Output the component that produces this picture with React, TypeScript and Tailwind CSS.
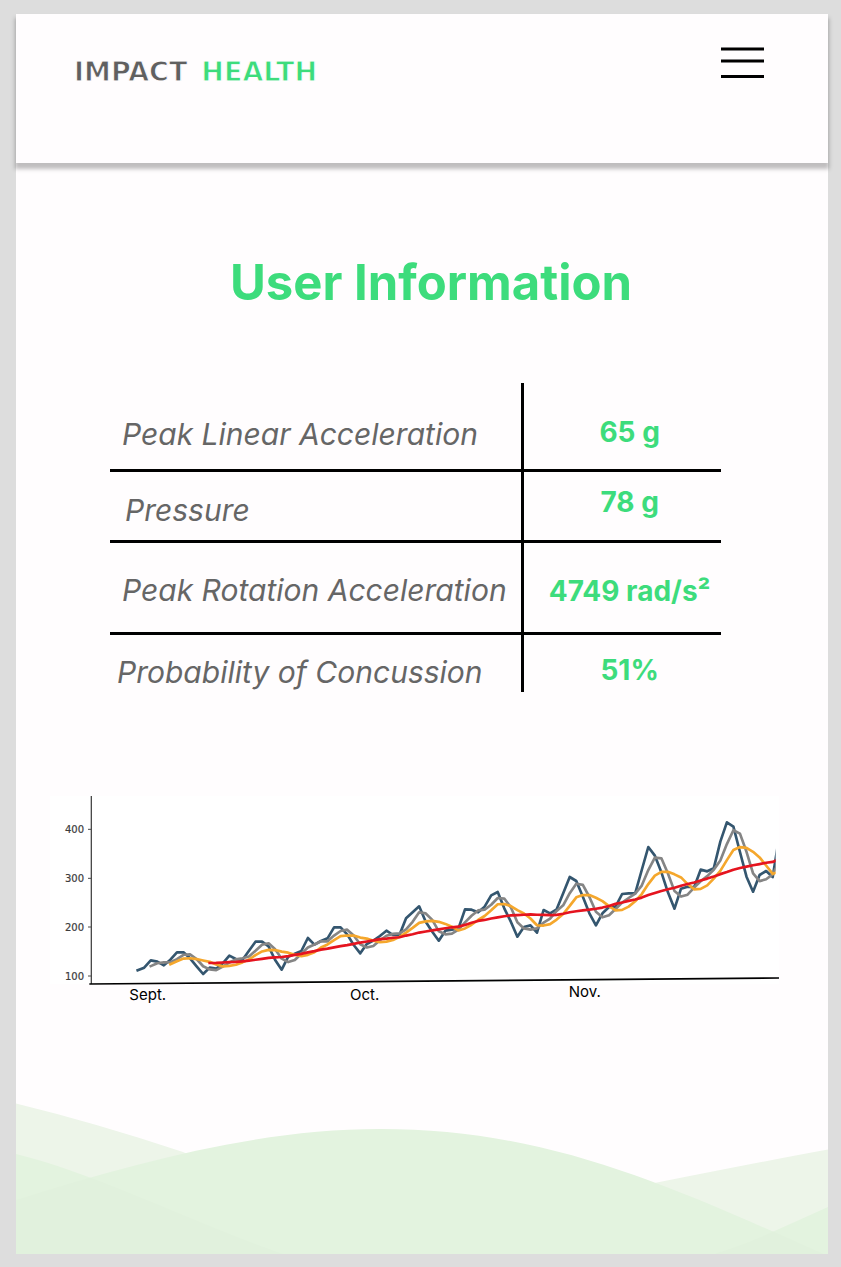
const metrics = [
  { label: 'Peak Linear Acceleration', value: '65 g', labelCell: 'h-[89px] pt-[31px] pl-[12px]', valueCell: 'pt-[29px]' },
  { label: 'Pressure', value: '78 g', labelCell: 'h-[71px] pt-[18px] pl-[15px]', valueCell: 'pt-[10px]' },
  { label: 'Peak Rotation Acceleration', value: '4749 rad/s²', labelCell: 'h-[92px] pt-[27px] pl-[12px]', valueCell: 'pt-[28px]' },
  { label: 'Probability of Concussion', value: '51%', labelCell: 'h-[57px] pt-[17px] pl-[7px]', valueCell: 'pt-[15px]' },
];

const readings = [
  571, 563, 541, 545, 556, 539, 517, 517, 535, 559, 582, 563, 566, 550, 527, 537, 540, 512, 485, 485,
  499, 540, 569, 530, 521, 513, 474, 494, 483, 475, 442, 442, 463, 495, 520, 492, 482, 468, 452, 465,
  464, 415, 397, 379, 425, 455, 482, 452, 449, 445, 388, 389, 397, 380, 346, 336, 385, 425, 470, 441,
  436, 458, 390, 400, 388, 340, 291, 303, 350, 400, 436, 400, 381, 380, 342, 340, 340, 270, 201, 227,
  277, 337, 386, 326, 320, 322, 269, 274, 265, 185, 127, 140, 216, 290, 335, 285, 273, 291, 170,
];

function movingAverage(size: number) {
  const points: string[] = [];
  for (let i = size - 1; i < readings.length; i++) {
    const slice = readings.slice(i - size + 1, i + 1);
    const mean = slice.reduce((a, b) => a + b, 0) / size;
    points.push(`${(263 + i * 19.64).toFixed(1)},${(mean - 48).toFixed(1)}`);
  }
  return points.join(' ');
}

const series = [
  { size: 1, color: '#34566f' },
  { size: 3, color: '#858585' },
  { size: 6, color: '#f5a72c' },
  { size: 12, color: '#e5141f' },
];

const yTicks = [
  { label: '400', y: 100 },
  { label: '300', y: 247 },
  { label: '200', y: 393 },
  { label: '100', y: 540 },
];

const months = [
  { label: 'Sept.', x: 238, y: 613 },
  { label: 'Oct.', x: 900, y: 613 },
  { label: 'Nov.', x: 1556, y: 604 },
];

function Header() {
  return (
    <header className="relative flex h-[149px] items-start justify-between bg-[#fffdfe] pr-16 pl-[58px] shadow-[0_5px_4px_1px_rgba(0,0,0,0.25)]">
      <a
        href="#"
        className="mt-[41px] flex gap-[14px] font-['DejaVu_Sans',sans-serif] text-[27px] leading-[34px] font-bold text-[#606060] [-webkit-text-stroke:1px_#fffdfe]"
      >
        <span>IMPACT</span>
        <span className="text-[#3ddc7c]">HEALTH</span>
      </a>
      <button type="button" aria-label="Menu" className="mt-[33px]">
        <svg width="43" height="31" viewBox="0 0 43 31" className="block" stroke="#000" strokeWidth="3">
          <path d="M0 2H43M0 14H43M0 29.500H43" />
        </svg>
      </button>
    </header>
  );
}

function MetricsTable() {
  return (
    <table className="w-full table-fixed border-separate border-spacing-0">
      <tbody>
        {metrics.map((m, i) => {
          const rule = i < metrics.length - 1 ? 'border-b-[3px]' : '';
          return (
            <tr key={m.label}>
              <th
                scope="row"
                className={`w-[67.8%] border-r-[3px] border-black text-left align-top text-[30px] leading-[40px] font-normal whitespace-nowrap text-[#666666] italic ${rule} ${m.labelCell}`}
              >
                {m.label}
              </th>
              <td
                className={`border-black pl-[14px] text-center align-top text-[28px] leading-[40px] font-bold whitespace-nowrap text-[#3ddc7c] ${rule} ${m.valueCell}`}
              >
                {m.value}
              </td>
            </tr>
          );
        })}
      </tbody>
    </table>
  );
}

function TrendChart() {
  return (
    <svg viewBox="0 0 2187 630" className="block h-auto w-full" role="img" aria-label="Readings from September to November">
      <defs>
        <clipPath id="plot">
          <rect x="124" y="0" width="2053" height="564" />
        </clipPath>
      </defs>
      <rect width="2187" height="564" fill="#ffffff" />
      <path d="M124 0V564" stroke="#4a4a4a" strokeWidth="4" />
      {yTicks.map((t) => (
        <g key={t.label}>
          <path d={`M114 ${t.y}H124`} stroke="#4a4a4a" strokeWidth="3" />
          <text x="102" y={t.y + 11} textAnchor="end" fontSize="30" fill="#3c3c3c" stroke="#3c3c3c" strokeWidth="0.600" className="font-['DejaVu_Sans',sans-serif]">
            {t.label}
          </text>
        </g>
      ))}
      <g clipPath="url(#plot)" fill="none" strokeWidth="8" strokeLinejoin="round" strokeLinecap="square">
        {series.map((s) => (
          <polyline key={s.size} points={movingAverage(s.size)} stroke={s.color} />
        ))}
      </g>
      <path d="M118 564L2187 546" stroke="#000" strokeWidth="5" />
      {months.map((m) => (
        <text key={m.label} x={m.x} y={m.y} fontSize="45" fill="#000">
          {m.label}
        </text>
      ))}
    </svg>
  );
}

const centreHill = 'M0 98C121 60 243 27 364 27C530 27 650 82 812 154V160H0Z';
const leftHill = 'M0 52C75 70 157 112 261 150L290 160H0Z';
const rightHill = 'M812 105L753 131.500Q728 143 695 153V160H812Z';

function Hills() {
  return (
    <svg viewBox="0 0 812 152" className="block h-auto w-full" aria-hidden="true">
      <defs>
        <clipPath id="centre">
          <path d={centreHill} />
        </clipPath>
      </defs>
      <path d="M0 1.500Q80 21 167 50L400 152H0Z" fill="#edf5e9" />
      <path d="M560 98L641 80.500Q754 58 812 47.500V152H560Z" fill="#edf5e9" />
      <path d={centreHill} fill="#e3f3df" />
      <path d={leftHill} fill="#e3f3df" />
      <path d={rightHill} fill="#e3f3df" />
      <path d={leftHill + rightHill} fill="#e1f1dd" clipPath="url(#centre)" />
    </svg>
  );
}

export default function App() {
  return (
    <div className="flex min-h-screen flex-col bg-[#dddddd] pt-[14px] pr-[13px] pb-[13px] pl-4 font-['Inter',sans-serif]">
      <div className="flex flex-1 flex-col bg-[#fffdfe]">
        <Header />
        <main className="flex flex-1 flex-col">
          <h1 className="mt-[91px] pl-[18px] text-center text-[49px] leading-[58px] font-bold text-[#3ddc7c]">User Information</h1>
          <section className="mt-[71px] mr-[107px] ml-[94px]">
            <MetricsTable />
          </section>
          <section className="mt-[104px] mr-[49px] mb-[90px] ml-[34px]">
            <TrendChart />
          </section>
        </main>
        <Hills />
      </div>
    </div>
  );
}
